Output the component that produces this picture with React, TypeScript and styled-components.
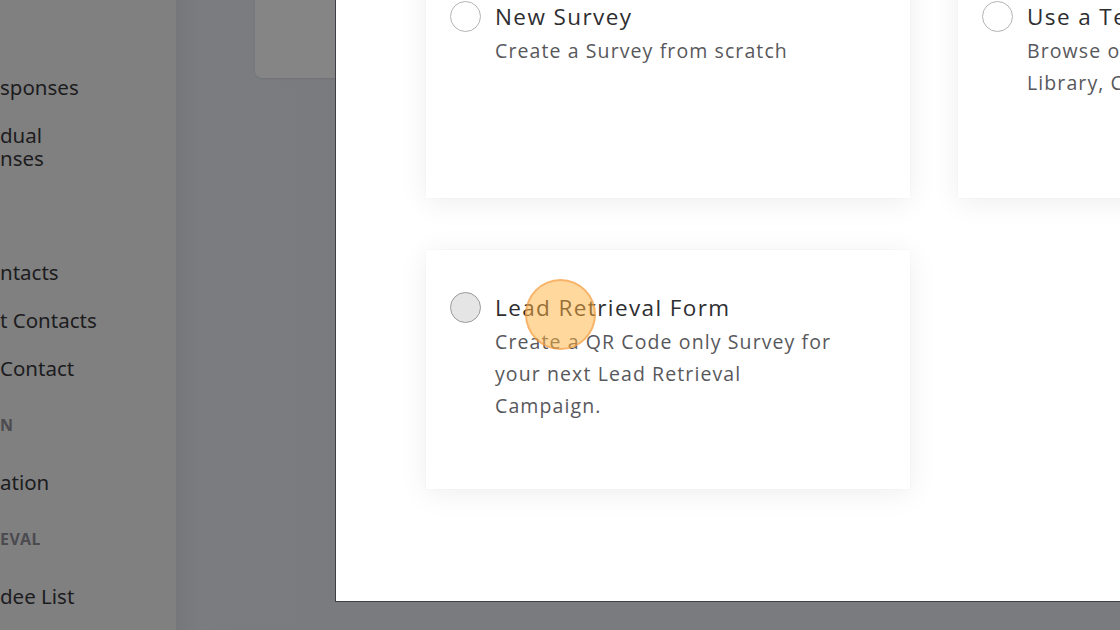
import React from "react";
import styled, { createGlobalStyle } from "styled-components";

const Global = createGlobalStyle`
  html, body { margin: 0; padding: 0; }
  body { width: 1120px; height: 630px; overflow: hidden; background: #7a7b7f; }
  * { box-sizing: border-box; }
`;

const Screen = styled.div`
  position: relative;
  display: flex;
  width: 1120px;
  height: 630px;
  overflow: hidden;
  background: #7a7b7f;
  font-family: "Open Sans", "Noto Sans", sans-serif;
`;

const Sidebar = styled.nav`
  width: 176px;
  flex: none;
  background: #808080;
  display: flex;
  flex-direction: column;
  padding-top: 76px;
`;

const NavItem = styled.div<{ $gap?: number }>`
  font-family: "Noto Sans", "Open Sans", sans-serif;
  font-size: 20.5px;
  line-height: 23px;
  color: #1c1c1e;
  margin-top: ${(p) => p.$gap ?? 0}px;
  white-space: pre-line;
`;

const NavHeading = styled.div<{ $gap?: number }>`
  font-family: "Noto Sans", "Open Sans", sans-serif;
  font-size: 16px;
  font-weight: 700;
  letter-spacing: 0.6px;
  line-height: 20px;
  color: #4b4b50;
  margin-top: ${(p) => p.$gap ?? 0}px;
`;

const Backdrop = styled.div`
  width: 159px;
  flex: none;
  display: flex;
  flex-direction: column;
  align-items: flex-end;
  background: linear-gradient(90deg, #76777b 0px, #7b7c80 24px, #7a7b7f 100%);
`;

const BehindCard = styled.div`
  width: 80px;
  height: 78px;
  background: #858585;
  border-bottom-left-radius: 7px;
  box-shadow: 0 1px 2px rgba(0, 0, 0, 0.08);
`;

const Right = styled.div`
  flex: 1;
  display: flex;
  flex-direction: column;
`;

const Modal = styled.div`
  height: 602px;
  background: #ffffff;
  border-left: 1px solid #3f4045;
  border-bottom: 1px solid #3f4045;
  padding-left: 90px;
  overflow: hidden;
`;

const Grid = styled.div`
  display: grid;
  grid-template-columns: 484px 484px;
  column-gap: 48px;
  row-gap: 52px;
  margin-top: -41px;
`;

const Card = styled.div`
  height: 239px;
  background: #fff;
  box-shadow: 0 4px 28px rgba(0, 0, 0, 0.07), 0 0 2px rgba(0, 0, 0, 0.04);
  padding: 42px 24px 0 24px;
  display: flex;
  gap: 14px;
`;

const Radio = styled.span<{ $hover?: boolean }>`
  flex: none;
  width: 31px;
  height: 31px;
  border-radius: 50%;
  border: 1.5px solid ${(p) => (p.$hover ? "#9a9a9a" : "#b4b4b4")};
  background: ${(p) => (p.$hover ? "#e5e5e5" : "#fff")};
`;

const Texts = styled.div`
  display: flex;
  flex-direction: column;
  padding-top: 2px;
  min-width: 0;
`;

const Title = styled.div`
  font-size: 22.5px;
  font-weight: 500;
  letter-spacing: 1.4px;
  line-height: 28px;
  color: #2e2e31;
  white-space: nowrap;
`;

const Desc = styled.div`
  font-size: 19.5px;
  letter-spacing: 1.1px;
  line-height: 32px;
  color: #58585c;
  margin-top: 4px;
  width: 345px;
`;

const Highlight = styled.div`
  position: absolute;
  left: 525px;
  top: 279px;
  width: 71px;
  height: 71px;
  border-radius: 50%;
  background: rgba(255, 178, 62, 0.5);
  border: 2px solid rgba(240, 150, 60, 0.55);
  pointer-events: none;
`;

export default function App() {
  return (
    <>
      <Global />
      <Screen>
        <Sidebar>
          <NavItem>sponses</NavItem>
          <NavItem $gap={25}>{"dual\nnses"}</NavItem>
          <NavItem $gap={91}>ntacts</NavItem>
          <NavItem $gap={25}>t Contacts</NavItem>
          <NavItem $gap={25}>Contact</NavItem>
          <NavHeading $gap={35}>N</NavHeading>
          <NavItem $gap={36}>ation</NavItem>
          <NavHeading $gap={35}>EVAL</NavHeading>
          <NavItem $gap={36}>dee List</NavItem>
        </Sidebar>
        <Backdrop>
          <BehindCard />
        </Backdrop>
        <Right>
          <Modal>
            <Grid>
              <Card>
                <Radio />
                <Texts>
                  <Title>New Survey</Title>
                  <Desc>Create a Survey from scratch</Desc>
                </Texts>
              </Card>
              <Card>
                <Radio />
                <Texts>
                  <Title>Use a Template</Title>
                  <Desc>Browse our Survey Template Library, Copy an existing Survey</Desc>
                </Texts>
              </Card>
              <Card>
                <Radio $hover />
                <Texts>
                  <Title>Lead Retrieval Form</Title>
                  <Desc>Create a QR Code only Survey for your next Lead Retrieval Campaign.</Desc>
                </Texts>
              </Card>
            </Grid>
          </Modal>
        </Right>
        <Highlight />
      </Screen>
    </>
  );
}
